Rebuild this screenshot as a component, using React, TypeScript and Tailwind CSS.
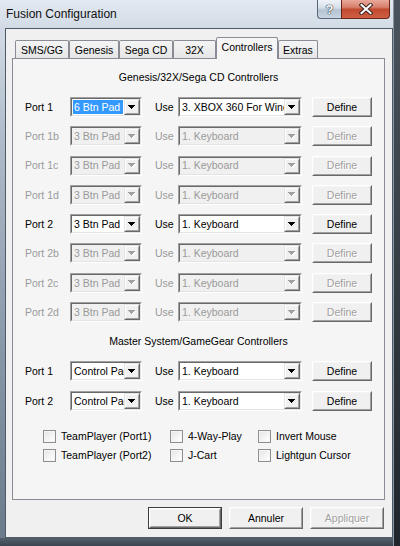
import React from "react";

type ComboProps = {
  value: string;
  width: string;
  disabled?: boolean;
  selected?: boolean;
};

function Arrow({ disabled }: { disabled?: boolean }) {
  const d = "M0 0H7V1H6V2H5V3H4V4H3V3H2V2H1V1H0Z";
  return (
    <svg width="8" height="5" viewBox="0 0 8 5" className="block">
      {disabled && <path d={d} fill="#ffffff" transform="translate(1 1)" />}
      <path d={d} fill={disabled ? "#a0a0a0" : "#000000"} />
    </svg>
  );
}

function Combo({ value, width, disabled, selected }: ComboProps) {
  return (
    <div
      className={`${width} h-[20px] flex border border-t-[#a0a0a0] border-l-[#a0a0a0] border-b-white border-r-white`}
    >
      <div
        className={`flex-1 min-w-0 flex border border-t-[#696969] border-l-[#696969] border-b-[#e3e3e3] border-r-[#e3e3e3] ${
          disabled ? "bg-[#f0f0f0]" : "bg-white"
        }`}
      >
        <div className="flex-1 min-w-0 overflow-hidden whitespace-nowrap flex items-center p-[1px]">
          <span
            className={`h-full flex items-center px-[1px] leading-none ${
              selected ? "bg-[#3399ff] text-white flex-1" : disabled ? "text-[#9a9a9a]" : "text-black"
            }`}
          >
            {value}
          </span>
        </div>
        <div className="w-[16px] h-full shrink-0 flex border border-t-[#e3e3e3] border-l-[#e3e3e3] border-b-[#696969] border-r-[#696969]">
          <div className="flex-1 flex items-center justify-center bg-[#f0f0f0] border border-t-white border-l-white border-b-[#a0a0a0] border-r-[#a0a0a0]">
            <Arrow disabled={disabled} />
          </div>
        </div>
      </div>
    </div>
  );
}

function Button({
  label,
  width,
  height,
  disabled,
  isDefault,
}: {
  label: string;
  width: string;
  height: string;
  disabled?: boolean;
  isDefault?: boolean;
}) {
  return (
    <div className={`${width} ${height} flex ${isDefault ? "border border-[#3c3c3c]" : ""}`}>
      <div className="flex-1 flex border border-t-[#ffffff] border-l-[#ffffff] border-b-[#696969] border-r-[#696969]">
        <div
          className={`flex-1 flex items-center justify-center bg-[#f0f0f0] border border-t-[#f4f4f4] border-l-[#f4f4f4] border-b-[#a0a0a0] border-r-[#a0a0a0] leading-none ${
            disabled ? "text-[#a0a0a0] [text-shadow:1px_1px_0_#ffffff]" : "text-black"
          }`}
        >
          {label}
        </div>
      </div>
    </div>
  );
}

type PortRow = {
  port: string;
  pad: string;
  device: string;
  enabled: boolean;
  selected?: boolean;
};

const genesisRows: PortRow[] = [
  { port: "Port 1", pad: "6 Btn Pad", device: "3. XBOX 360 For Windows", enabled: true, selected: true },
  { port: "Port 1b", pad: "3 Btn Pad", device: "1. Keyboard", enabled: false },
  { port: "Port 1c", pad: "3 Btn Pad", device: "1. Keyboard", enabled: false },
  { port: "Port 1d", pad: "3 Btn Pad", device: "1. Keyboard", enabled: false },
  { port: "Port 2", pad: "3 Btn Pad", device: "1. Keyboard", enabled: true },
  { port: "Port 2b", pad: "3 Btn Pad", device: "1. Keyboard", enabled: false },
  { port: "Port 2c", pad: "3 Btn Pad", device: "1. Keyboard", enabled: false },
  { port: "Port 2d", pad: "3 Btn Pad", device: "1. Keyboard", enabled: false },
];

const smsRows: PortRow[] = [
  { port: "Port 1", pad: "Control Pad", device: "1. Keyboard", enabled: true },
  { port: "Port 2", pad: "Control Pad", device: "1. Keyboard", enabled: true },
];

function ControllerRow({ row }: { row: PortRow }) {
  const text = row.enabled ? "text-black" : "text-[#9a9a9a]";
  return (
    <div className="h-[20px] flex items-center pl-[12px]">
      <div className={`w-[45px] leading-none ${text}`}>{row.port}</div>
      <Combo width="w-[72px]" value={row.pad} disabled={!row.enabled} selected={row.selected} />
      <div className={`w-[36px] pl-[13px] leading-none ${text}`}>Use</div>
      <Combo width="w-[124px]" value={row.device} disabled={!row.enabled} />
      <div className="ml-[10px]">
        <Button label="Define" width="w-[60px]" height="h-[20px]" disabled={!row.enabled} />
      </div>
    </div>
  );
}

function Check({ label }: { label: string }) {
  return (
    <div className="flex items-center h-[13px]">
      <div className="w-[13px] h-[13px] shrink-0 border border-[#8e8f8f] bg-white mr-[5px]">
        <div className="w-full h-full border border-[#f4f4f4] bg-[linear-gradient(135deg,#e6e6e6,#ffffff)]" />
      </div>
      <span className="leading-none whitespace-nowrap text-black">{label}</span>
    </div>
  );
}

const tabs = [
  { label: "SMS/GG", w: "w-[54px]" },
  { label: "Genesis", w: "w-[50px]" },
  { label: "Sega CD", w: "w-[54px]" },
  { label: "32X", w: "w-[43px]" },
  { label: "Controllers", w: "w-[62px]", active: true },
  { label: "Extras", w: "w-[40px]" },
];

export default function App() {
  return (
    <div className="w-[400px] h-[546px] flex overflow-hidden font-['Liberation_Sans',Arial,sans-serif] text-[10.5px] bg-[#2a3139]">
      <div className="w-[393px] flex flex-col bg-[linear-gradient(to_bottom,#e2e9f1_0px,#d2dbe5_28px,#aebbc9_140px,#8796a6_360px,#6b7a8b_546px)]">
        {/* title bar */}
        <div className="h-[28px] shrink-0 flex items-start">
          <div className="flex-1 pl-[6px] pt-[7px] text-[12px] leading-[15px] text-[#111]">
            Fusion Configuration
          </div>
          <div className="flex mr-[3px]">
            <div className="w-[24px] h-[19px] rounded-bl-[4px] border border-t-0 border-r-0 border-[#56677a] bg-[linear-gradient(to_bottom,#eef3f8_0%,#d5dee8_45%,#b4c2d1_55%,#c9d5e2_100%)] flex items-center justify-center">
              <span className="text-[13px] font-bold leading-none text-white [text-shadow:0_0_1px_#2b3440,0_0_1px_#2b3440,0_0_1px_#2b3440]">
                ?
              </span>
            </div>
            <div className="w-[49px] h-[19px] rounded-br-[4px] border border-t-0 border-[#6a2418] bg-[linear-gradient(to_bottom,#e9a99b_0%,#d7806b_40%,#c24a30_52%,#cf5f43_100%)] flex items-center justify-center">
              <svg width="14" height="12" viewBox="0 0 14 12">
                <path d="M2.5 2 L11.5 10 M11.5 2 L2.5 10" stroke="#3b2520" strokeWidth="4" strokeLinecap="square" />
                <path d="M2.5 2 L11.5 10 M11.5 2 L2.5 10" stroke="#ffffff" strokeWidth="2" strokeLinecap="square" />
              </svg>
            </div>
          </div>
        </div>

        <div className="flex-1 flex">
          <div className="w-[5px] shrink-0" />
          {/* client area */}
          <div className="flex-1 flex flex-col border border-[#4d5a68] bg-[#f0f0f0]">
            <div className="ml-[6px] mt-[8px] w-[373px] flex flex-col">
              <div className="h-[21px] flex items-end pl-[3px]">
                {tabs.map((t) =>
                  t.active ? (
                    <div
                      key={t.label}
                      className={`${t.w} h-[22px] -mb-[1px] relative z-10 border border-b-0 border-[#898c95] rounded-t-[2px] bg-[#f5f5f5] flex justify-center pt-[4px] leading-none text-black`}
                    >
                      {t.label}
                    </div>
                  ) : (
                    <div
                      key={t.label}
                      className={`${t.w} h-[18px] border border-b-0 border-[#898c95] rounded-t-[2px] bg-[linear-gradient(to_bottom,#f4f4f4,#e6e6e6)] flex justify-center pt-[4px] leading-none text-black`}
                    >
                      {t.label}
                    </div>
                  )
                )}
              </div>
              {/* tab page */}
              <div className="h-[442px] border border-[#898c95] bg-[#f5f5f5] flex flex-col">
                <div className="mt-[11px] h-[14px] leading-[14px] text-center text-black">
                  Genesis/32X/Sega CD Controllers
                </div>
                <div className="mt-[13px] flex flex-col gap-[9.3px]">
                  {genesisRows.map((r) => (
                    <ControllerRow key={r.port} row={r} />
                  ))}
                </div>
                <div className="mt-[12px] h-[14px] leading-[14px] text-center text-black">
                  Master System/GameGear Controllers
                </div>
                <div className="mt-[13px] flex flex-col gap-[10px]">
                  {smsRows.map((r) => (
                    <ControllerRow key={r.port} row={r} />
                  ))}
                </div>
                <div className="mt-[19px] pl-[30px] grid grid-cols-[127px_88px_1fr] gap-y-[6px]">
                  <Check label="TeamPlayer (Port1)" />
                  <Check label="4-Way-Play" />
                  <Check label="Invert Mouse" />
                  <Check label="TeamPlayer (Port2)" />
                  <Check label="J-Cart" />
                  <Check label="Lightgun Cursor" />
                </div>
              </div>
            </div>
            {/* dialog buttons */}
            <div className="mt-[7px] flex justify-end gap-[7px] pr-[8px]">
              <Button label="OK" width="w-[74px]" height="h-[22px]" isDefault />
              <Button label="Annuler" width="w-[74px]" height="h-[22px]" />
              <Button label="Appliquer" width="w-[74px]" height="h-[22px]" disabled />
            </div>
          </div>
        </div>
        <div className="h-[8px] shrink-0 bg-[linear-gradient(to_bottom,#56606c,#3a4450)]" />
      </div>
      <div className="w-[7px] shrink-0 flex">
        <div className="w-[1px] bg-[#8995a3]" />
        <div className="flex-1 bg-[linear-gradient(to_bottom,#4a545e,#1f252b)]" />
      </div>
    </div>
  );
}
